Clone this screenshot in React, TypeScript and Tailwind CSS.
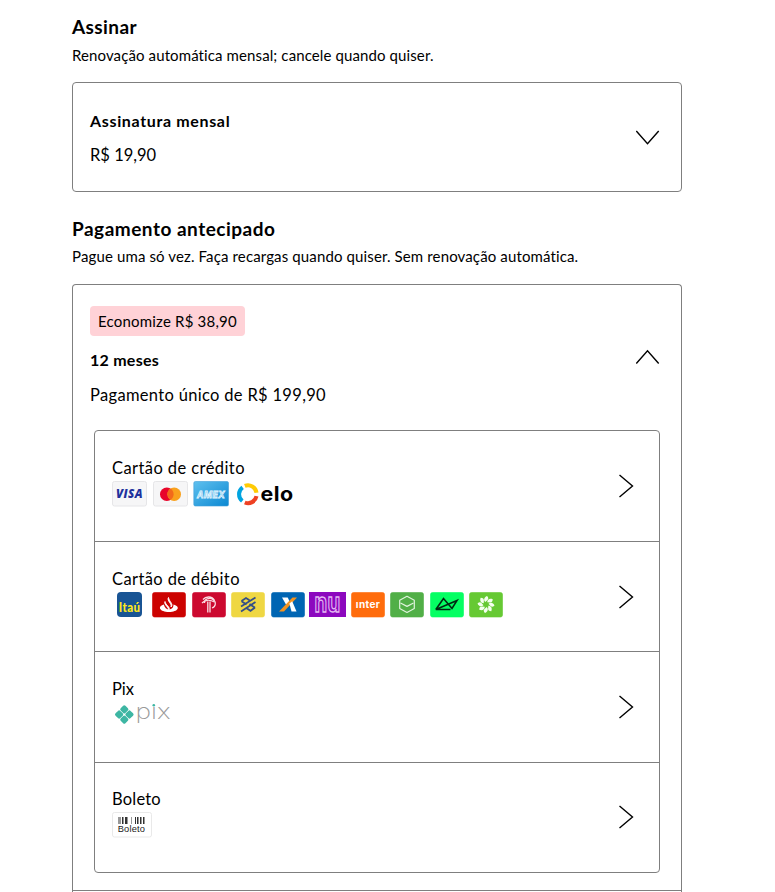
import type { ReactNode } from "react";

function Chevron({ d, w, h }: { d: string; w: number; h: number }) {
  return (
    <svg width={w} height={h} viewBox={`0 0 ${w} ${h}`} fill="none" stroke="#000" strokeWidth="1.4" className="shrink-0">
      <path d={d} />
    </svg>
  );
}

const ChevronDown = () => <Chevron w={24} h={16} d="M.3 2 11.500 14.800 22.700 2" />;
const ChevronUp = () => <Chevron w={24} h={16} d="M.3 14.500 11.500 1.700 22.700 14.500" />;
const ChevronRight = () => <Chevron w={16} h={24} d="M1.500 1 14.500 12 1.500 23" />;

function Tile({ w, fill, stroke, className, children }: { w: number; fill: string; stroke?: string; className?: string; children: ReactNode }) {
  return (
    <svg width={w} height="26" viewBox={`0 0 ${w} 26`} className={`block shrink-0 overflow-visible ${className ?? ""}`}>
      <rect x="0.5" y="0.5" width={w - 1} height="24.500" rx="2" fill={fill} stroke={stroke ?? fill} strokeOpacity={stroke ? 1 : 0.6} />
      {children}
    </svg>
  );
}

function CreditLogos() {
  return (
    <div className="flex">
      <Tile w={35} fill="#f6f6f7" stroke="#e6e6e8">
        <text x="4" y="17" fontFamily="Open Sans, sans-serif" fontWeight="800" fontStyle="italic" fontSize="11.500" textLength="27" lengthAdjust="spacingAndGlyphs" fill="#20319d">VISA</text>
      </Tile>
      <Tile w={35} fill="#f6f6f7" stroke="#e6e6e8" className="ml-1.5">
        <circle cx="13.800" cy="13.200" r="6.800" fill="#e8052a" />
        <circle cx="21.200" cy="13.200" r="6.800" fill="#f9a11d" />
        <path d="M17.500 7.500a6.800 6.800 0 0 1 0 11.400a6.800 6.800 0 0 1 0-11.400" fill="#f26a1b" />
      </Tile>
      <svg width="36" height="26" viewBox="0 0 36 26" className="ml-[5px] overflow-visible">
        <defs>
          <linearGradient id="amex" x1="0" y1="0" x2="1" y2="1">
            <stop offset="0" stopColor="#5fc0ee" />
            <stop offset="1" stopColor="#0b88d2" />
          </linearGradient>
        </defs>
        <rect x="0.800" y="0.500" width="34.700" height="24.500" rx="1.500" fill="url(#amex)" stroke="#3f9fd8" strokeOpacity="0.6" />
        <text x="4" y="16.500" fontFamily="Inter, sans-serif" fontWeight="700" fontStyle="italic" fontSize="9.500" textLength="28" lengthAdjust="spacingAndGlyphs" fill="#58b5e6" stroke="#e6f6ff" strokeWidth="0.800">AMEX</text>
      </svg>
      <svg width="58" height="26" viewBox="0 0 58 26" className="ml-[8px] overflow-visible">
        <g fill="none" strokeWidth="4">
          <path d="M7.800 4.800A8.600 8.600 0 0 1 19.500 11.800" stroke="#ffcb05" />
          <path d="M5.600 6.300A8.600 8.600 0 0 0 5.300 20" stroke="#00a4e0" />
          <path d="M19.500 15.200A8.600 8.600 0 0 1 7.800 21.500" stroke="#ee4123" />
        </g>
        <text x="23.500" y="19.500" fontFamily="Inter, sans-serif" fontWeight="700" fontSize="19.500" textLength="33" lengthAdjust="spacingAndGlyphs" fill="#000">elo</text>
      </svg>
    </div>
  );
}

function DebitLogos() {
  return (
    <div className="ml-[5px] flex">
      <svg width="25" height="26" viewBox="0 0 25 26" className="overflow-visible">
        <rect width="25" height="25" rx="4" fill="#185494" />
        <text x="1.800" y="20.300" fontFamily="Lato, sans-serif" fontWeight="900" fontSize="13" textLength="21.500" lengthAdjust="spacingAndGlyphs" fill="#ffe81a">Itaú</text>
      </svg>
      <Tile w={34} fill="#cc0200" className="ml-[10px]">
        <path d="M16.500 5.500c-2 3.500 3.500 5.500 2.500 9.500c3-3-2-5.500-2.500-9.500M13 9.500c-1.500 3.500 4.500 5.500 3.500 9.500c3-4-3-5.500-3.500-9.500" fill="#fff" stroke="#fff" strokeWidth="0.900" />
        <path d="M11.800 12.500c-7 2-4 7.500 5.200 7.500s12-5.500 4.500-7.500c0 2.500-1 4.500-4 5c-3 0-5-2-5.700-5" fill="#fff" />
      </Tile>
      <Tile w={34} fill="#cc092f" className="ml-1.5">
        <g fill="none" stroke="#fbdde3" strokeWidth="1.300">
          <path d="M11 7.500c3-3.500 9-3.500 11.500 1M10 11c3-3 8-3.500 12.500-1M15.800 9.500v11M18 9.500v11" />
          <path d="M12.500 11c-.5-4 5-6 8.500-3.500c3.500 2.500 3 7-1 8.500" strokeWidth="1.200" />
        </g>
      </Tile>
      <Tile w={34} fill="#efd743" className="ml-[5px]">
        <g fill="none" stroke="#344f87" strokeWidth="1.800">
          <path d="M24.500 5.500L10 14.500M24.500 10L10 19.500M10.500 9L15 6l3.500 2.300M24 15.500L19.500 18.800l-3.800-2.500" />
          <path d="M10.500 9.300l5 3.200M18.500 12l5.500 3.700" />
        </g>
      </Tile>
      <Tile w={34} fill="#0065b3" className="ml-1.5">
        <path d="M11 5.500h5.700l2.600 5.500l-3.500 3z" fill="#fff" />
        <path d="M26 5.500h-4.500L8 19.500h5z" fill="#f39320" />
        <path d="M18.400 11.600l2.800-2.300l4.300 10.200h-5z" fill="#fff" />
      </Tile>
      <svg width="37" height="26" viewBox="0 0 37 26" className="ml-[4px] overflow-visible">
        <rect width="37" height="25" fill="#8c08be" />
        <text x="5.500" y="19.500" fontFamily="Inter, sans-serif" fontWeight="700" fontSize="26" textLength="26" lengthAdjust="spacingAndGlyphs" fill="none" stroke="#e4b7f2" strokeWidth="1.300">nu</text>
      </svg>
      <Tile w={34} fill="#ff6c0c" className="ml-[5px]">
        <text x="4.800" y="15.800" fontFamily="Inter, sans-serif" fontWeight="700" fontSize="10" textLength="24.500" lengthAdjust="spacingAndGlyphs" fill="#fff">ınter</text>
      </Tile>
      <Tile w={34} fill="#51af47" className="ml-[5px]">
        <g fill="none" stroke="#dff3dc" strokeWidth="1.200" strokeLinejoin="round">
          <path d="M17 4.300l7.300 4v8.200l-7.300 4l-7.300-4V8.300z" />
          <path d="M10.500 11l6.500 3.400l6.500-3.400" />
        </g>
      </Tile>
      <Tile w={34} fill="#05ff63" className="ml-1.5">
        <path d="M5.800 17.500L13.500 6.500L22 16.500L27 8.500L5.800 17.500H20.500" fill="none" stroke="#002b12" strokeWidth="1.600" />
      </Tile>
      <Tile w={34} fill="#66c933" className="ml-[5px]">
        <g fill="#f4ffef">
          {[0, 45, 90, 135, 180, 225, 270, 315].map((a) => (
            <path key={a} transform={`rotate(${a} 17 12.5)`} d="M16.300 10c-2-2-1.300-4.800 1.700-6c1.500 1.500 1.700 3 .5 4z" />
          ))}
        </g>
      </Tile>
    </div>
  );
}

function PixLogo() {
  return (
    <svg width="62" height="26" viewBox="0 0 62 26" className="overflow-visible">
      <g transform="rotate(45 12.300 12.500)" fill="#3db6a3">
        <rect x="5.300" y="5.500" width="6.700" height="6.700" rx="1.600" />
        <rect x="12.600" y="5.500" width="6.700" height="6.700" rx="1.600" />
        <rect x="5.300" y="12.800" width="6.700" height="6.700" rx="1.600" />
        <rect x="12.600" y="12.800" width="6.700" height="6.700" rx="1.600" />
      </g>
      <text x="23.500" y="16.500" fontFamily="Inter, sans-serif" fontWeight="200" fontSize="21" textLength="35" lengthAdjust="spacingAndGlyphs" fill="#999">pıx</text>
      <circle cx="41.800" cy="3.300" r="1.300" fill="#3db6a3" />
    </svg>
  );
}

function BoletoLogo() {
  const bars = [[6, 3], [10, 1.5], [13, 2.5], [19, 1], [23, 1], [25, 1.5], [28, 1.5], [31, 1.5]];
  return (
    <svg width="40" height="27" viewBox="0 0 40 27" className="overflow-visible">
      <rect x="0.500" y="0.500" width="39" height="24.500" rx="2" fill="#fff" stroke="#e9e9e9" />
      {bars.map(([x, w], i) => (
        <rect key={x} x={x} y="5" width={w} height="7" fill={i === 0 || i === 3 ? "#999" : "#333"} />
      ))}
      <text x="5.700" y="20.300" fontFamily="Liberation Sans, sans-serif" fontSize="9.500" textLength="27.500" lengthAdjust="spacingAndGlyphs" fill="#222">Boleto</text>
    </svg>
  );
}

function Method({ label, className, children }: { label: string; className: string; children: ReactNode }) {
  return (
    <div className={`flex items-start justify-between pr-[25px] pl-[17px] ${className}`}>
      <div>
        <div className="mb-px h-6 text-[16.5px] leading-6 whitespace-nowrap">{label}</div>
        {children}
      </div>
      <div className="mt-[18px]">
        <ChevronRight />
      </div>
    </div>
  );
}

export default function App() {
  return (
    <main className="h-[892px] overflow-hidden bg-white pt-[15px] pl-[72px] font-['Lato',sans-serif] text-black">
      <div className="w-[610px]">
        <h2 className="text-[19px] leading-6 font-bold tracking-[0.4px]">Assinar</h2>
        <p className="mt-1.5 text-[15px] leading-5 tracking-[0.11px]">Renovação automática mensal; cancele quando quiser.</p>
        <section className="mt-[17px] flex h-[110px] items-center justify-between rounded-[4px] border border-[#7f7f7f] pr-[21px] pl-[17px]">
          <div className="self-start pt-[26px]">
            <h3 className="text-[16px] leading-6 font-bold tracking-[0.65px]">Assinatura mensal</h3>
            <p className="mt-2.5 text-[16.5px] leading-6">R$ 19,90</p>
          </div>
          <ChevronDown />
        </section>

        <h2 className="mt-[25px] text-[19px] leading-6 font-bold tracking-[0.5px]">Pagamento antecipado</h2>
        <p className="mt-[5px] text-[15px] leading-5 tracking-[0.13px]">Pague uma só vez. Faça recargas quando quiser. Sem renovação automática.</p>
        <section className="mt-[18px] rounded-t-[4px] border border-b-0 border-[#7f7f7f]">
          <div className="border-b border-[#7f7f7f] px-[17px] pt-[21px] pb-[17px]">
            <div className="flex items-center justify-between pr-[4px]">
              <div>
                <div className="h-[30px] w-[155px] rounded-[4px] bg-[#ffd2d7] pl-2 text-[15px] leading-[30px] tracking-[0.2px] whitespace-nowrap">Economize R$ 38,90</div>
                <h3 className="mt-3 text-[16px] leading-6 font-bold tracking-[0.25px]">12 meses</h3>
                <p className="mt-[11px] text-[16.5px] leading-6 tracking-[0.32px]">Pagamento único de R$ 199,90</p>
              </div>
              <ChevronUp />
            </div>
            <div className="mt-[23px] ml-1 w-[566px] rounded-[4px] border border-[#7f7f7f]">
              <Method label="Cartão de crédito" className="h-[111px] border-b border-[#7f7f7f] pt-[25px] tracking-[0.42px]"><CreditLogos /></Method>
              <Method label="Cartão de débito" className="h-[110px] border-b border-[#7f7f7f] pt-[25px] tracking-[0.4px]"><DebitLogos /></Method>
              <Method label="Pix" className="h-[111px] border-b border-[#7f7f7f] pt-[25px]"><PixLogo /></Method>
              <Method label="Boleto" className="h-[109px] pt-[24px] tracking-[0.2px]"><BoletoLogo /></Method>
            </div>
          </div>
          <div className="h-10" />
        </section>
      </div>
    </main>
  );
}
